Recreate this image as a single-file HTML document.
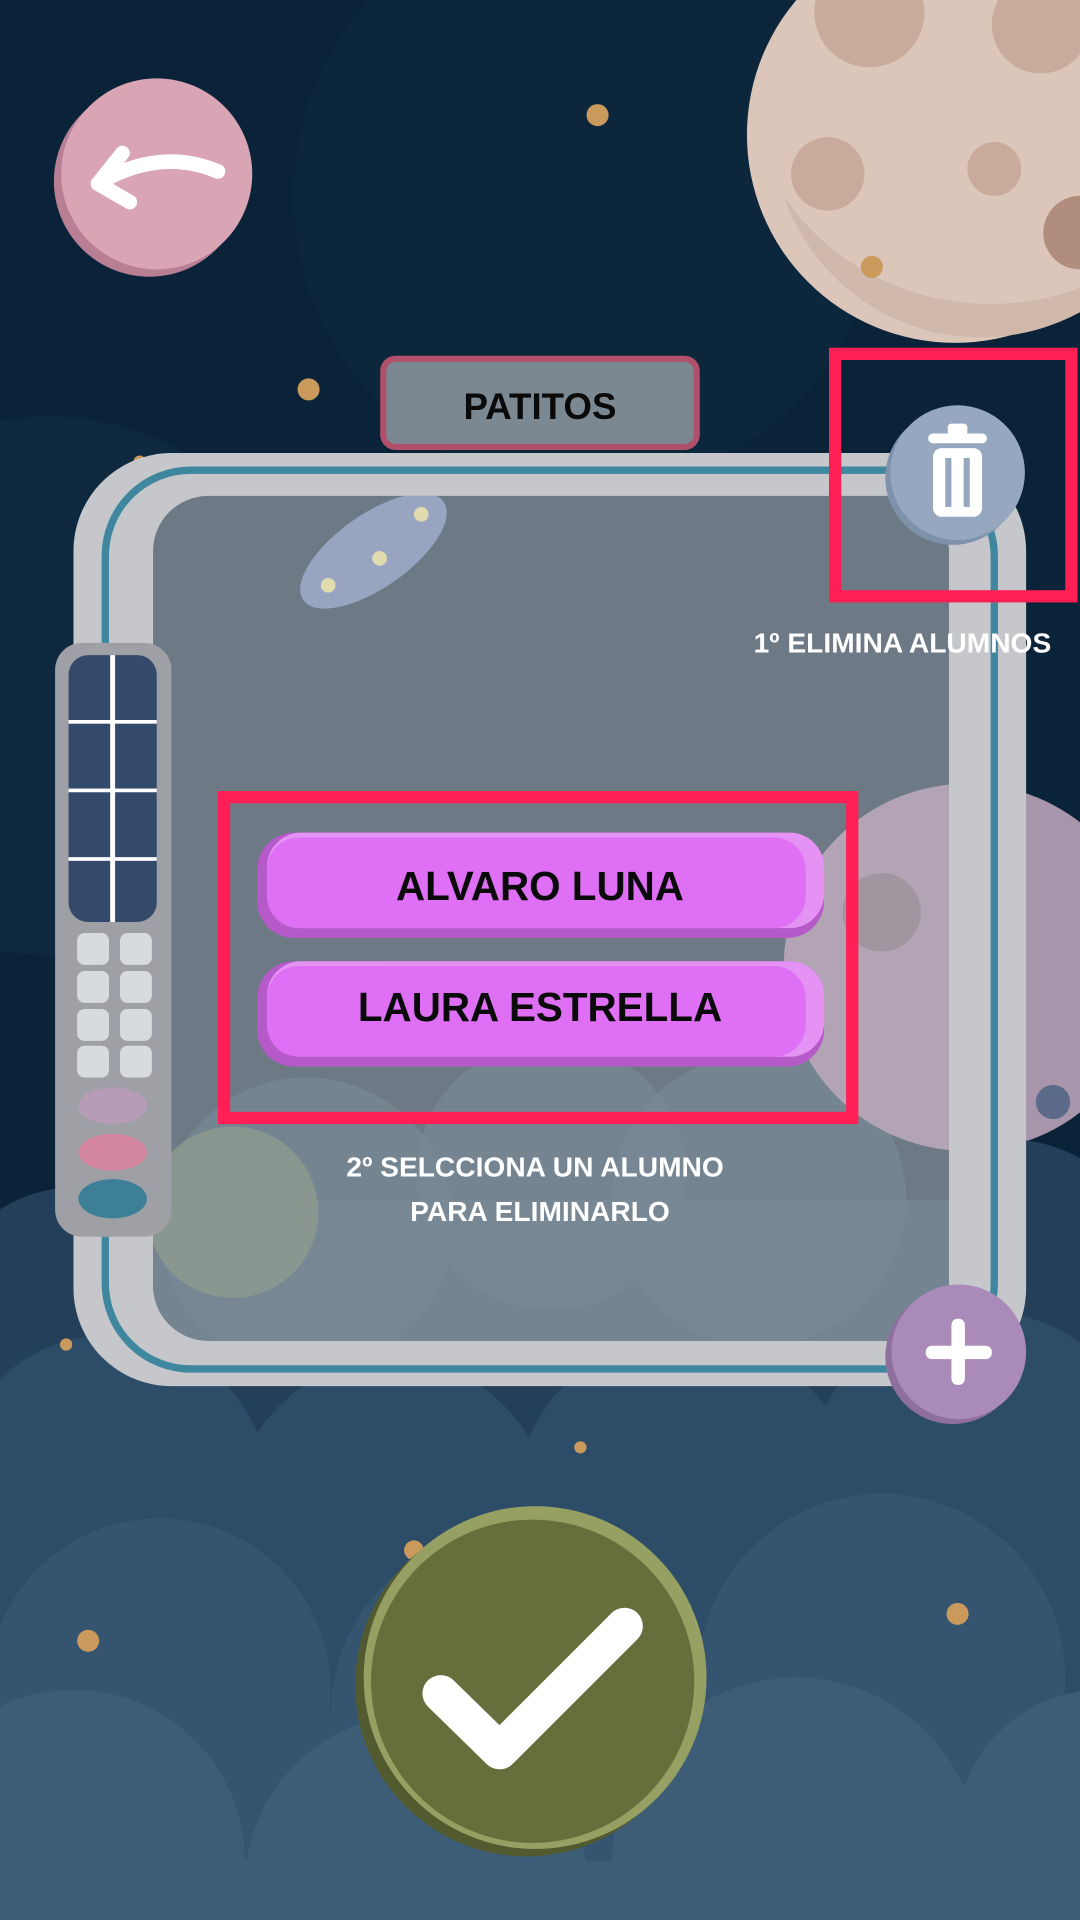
<!DOCTYPE html>
<html><head><meta charset="utf-8"><style>
html,body{margin:0;padding:0;background:#0b2338;width:1080px;height:1920px;overflow:hidden}
svg{display:block}
text{font-family:"Liberation Sans",sans-serif;font-weight:bold}
</style></head><body>
<svg width="1080" height="1920" viewBox="0 0 882 1568" xmlns="http://www.w3.org/2000/svg">
<defs><clipPath id="pc"><rect x="125" y="405" width="650" height="690" rx="45"/></clipPath></defs>
<rect width="882" height="1568" fill="#0b2338"/>
<circle cx="480" cy="160" r="240" fill="#0e2a40" opacity="0.6"/>
<circle cx="40" cy="560" r="220" fill="#102c44" opacity="0.6"/>
<circle cx="780" cy="110" r="170" fill="#dbc6b9"/>
<path d="M882 255 A170 170 0 0 1 640 160 A200 190 0 0 0 882 235Z" fill="#d0b9aa"/>
<circle cx="676" cy="142" r="30" fill="#c9ab9b"/>
<circle cx="812" cy="138" r="22" fill="#c9ab9b"/>
<circle cx="850" cy="20" r="40" fill="#c9ab9b"/>
<circle cx="710" cy="10" r="45" fill="#c9ab9b"/>
<circle cx="882" cy="190" r="30" fill="#b08d7c"/>
<!-- planet behind frame -->
<circle cx="790" cy="790" r="150" fill="#a796ab"/>
<circle cx="860" cy="900" r="14" fill="#5a6a88"/>
<g fill="#233f5a">
<circle cx="60" cy="1080" r="110"/><circle cx="230" cy="1110" r="120"/><circle cx="420" cy="1120" r="120"/><circle cx="620" cy="1100" r="130"/><circle cx="820" cy="1060" r="130"/>
<rect x="0" y="1100" width="882" height="470"/>
</g>
<g fill="#2c4c68">
<circle cx="90" cy="1220" r="130"/><circle cx="320" cy="1240" r="130"/><circle cx="560" cy="1230" r="140"/><circle cx="800" cy="1210" r="140"/>
<rect x="0" y="1230" width="882" height="340"/>
</g>
<g fill="#34546f">
<circle cx="130" cy="1380" r="140"/><circle cx="420" cy="1400" r="150"/><circle cx="720" cy="1370" r="150"/>
<rect x="0" y="1400" width="882" height="170"/>
</g>
<g fill="#3d5d77">
<circle cx="60" cy="1520" r="140"/><circle cx="340" cy="1540" r="140"/><circle cx="650" cy="1520" r="150"/><circle cx="900" cy="1500" r="120"/>
<rect x="0" y="1520" width="882" height="50"/>
</g>
<g fill="#c99a5c">
<circle cx="488" cy="94" r="9"/><circle cx="252" cy="318" r="9"/><circle cx="712" cy="218" r="9"/><circle cx="114" cy="377" r="5"/><circle cx="72" cy="1340" r="9"/><circle cx="782" cy="1318" r="9"/><circle cx="54" cy="1098" r="5"/><circle cx="474" cy="1182" r="5"/><circle cx="338" cy="1266" r="8"/>
</g>
<circle cx="122" cy="148" r="78" fill="#b87f94"/>
<circle cx="128" cy="142" r="78" fill="#d9a4b4"/>
<path d="M178 140 Q130 120 80 150 M80 150 L100 125 M80 150 L106 165" stroke="#fff" stroke-width="12" stroke-linecap="round" fill="none"/>
<rect x="60" y="370" width="778" height="762" rx="80" fill="#c6c7cb"/>
<rect x="86" y="384" width="726" height="734" rx="70" fill="none" stroke="#3f879e" stroke-width="6"/>
<rect x="125" y="405" width="650" height="690" rx="45" fill="#6d7a86"/>
<g clip-path="url(#pc)">
<circle cx="250" cy="1000" r="120" fill="#798996" opacity="0.7"/>
<circle cx="450" cy="960" r="110" fill="#798996" opacity="0.7"/>
<circle cx="620" cy="980" r="120" fill="#798996" opacity="0.7"/>
<rect x="125" y="980" width="650" height="120" fill="#798996" opacity="0.7"/>
<circle cx="790" cy="790" r="150" fill="#b2a3b5"/>
<circle cx="720" cy="745" r="32" fill="#a1959f"/>
<circle cx="190" cy="990" r="70" fill="#8f9a8e" opacity="0.8"/>
<ellipse cx="305" cy="450" rx="70" ry="30" transform="rotate(-35 305 450)" fill="#98a4c0"/>
<circle cx="268" cy="478" r="6" fill="#e0dcb0"/><circle cx="310" cy="456" r="6" fill="#e0dcb0"/><circle cx="344" cy="420" r="6" fill="#e0dcb0"/>
</g>
<rect x="45" y="525" width="95" height="485" rx="22" fill="#9ea0a5"/>
<rect x="56" y="535" width="72" height="218" rx="16" fill="#344a6b"/>
<rect x="90" y="535" width="4" height="218" fill="#fff"/>
<rect x="56" y="588" width="72" height="3" fill="#fff"/><rect x="56" y="644" width="72" height="3" fill="#fff"/><rect x="56" y="700" width="72" height="3" fill="#fff"/>
<g fill="#d8dbde">
<rect x="63" y="762" width="26" height="26" rx="6"/><rect x="98" y="762" width="26" height="26" rx="6"/>
<rect x="63" y="793" width="26" height="26" rx="6"/><rect x="98" y="793" width="26" height="26" rx="6"/>
<rect x="63" y="824" width="26" height="26" rx="6"/><rect x="98" y="824" width="26" height="26" rx="6"/>
<rect x="63" y="854" width="26" height="26" rx="6"/><rect x="98" y="854" width="26" height="26" rx="6"/>
</g>
<ellipse cx="92" cy="903" rx="28" ry="15" fill="#b69cb6"/>
<ellipse cx="92" cy="941" rx="28" ry="15" fill="#d3869e"/>
<ellipse cx="92" cy="979" rx="28" ry="16" fill="#3e7f98"/>
<rect x="313" y="293" width="256" height="72" rx="10" fill="#7b8891" stroke="#b0506a" stroke-width="5"/>
<text x="441" y="342" font-size="30" text-anchor="middle" fill="#0a0a0a">PATITOS</text>
<circle cx="778" cy="390" r="55" fill="#7e92ab"/>
<circle cx="782" cy="386" r="55" fill="#95a8bf"/>
<rect x="758" y="354" width="48" height="8" rx="4" fill="#fff"/>
<rect x="774" y="346" width="16" height="10" rx="3" fill="#fff"/>
<rect x="762" y="366" width="40" height="56" rx="7" fill="#fff"/>
<rect x="772" y="374" width="5" height="40" fill="#95a8bf"/><rect x="787" y="374" width="5" height="40" fill="#95a8bf"/>
<rect x="682" y="289" width="193" height="198" fill="none" stroke="#ff1f54" stroke-width="10"/>
<text x="737" y="533" font-size="23" text-anchor="middle" fill="#fff">1º ELIMINA ALUMNOS</text>
<rect x="183" y="651" width="513" height="262" fill="none" stroke="#ff1f54" stroke-width="10"/>
<rect x="210" y="680" width="463" height="86" rx="30" fill="#b55ac8"/>
<rect x="218" y="680" width="455" height="78" rx="28" fill="#e592f5"/>
<rect x="218" y="684" width="440" height="74" rx="26" fill="#df6ff4"/>
<text x="441" y="735" font-size="33" text-anchor="middle" fill="#0a0a0a">ALVARO LUNA</text>
<rect x="210" y="785" width="463" height="86" rx="30" fill="#b55ac8"/>
<rect x="218" y="785" width="455" height="78" rx="28" fill="#e592f5"/>
<rect x="218" y="789" width="440" height="74" rx="26" fill="#df6ff4"/>
<text x="441" y="834" font-size="33" text-anchor="middle" fill="#0a0a0a">LAURA ESTRELLA</text>
<text x="437" y="961" font-size="23" text-anchor="middle" fill="#fff">2º SELCCIONA UN ALUMNO</text>
<text x="441" y="997" font-size="23" text-anchor="middle" fill="#fff">PARA ELIMINARLO</text>
<circle cx="778" cy="1108" r="55" fill="#8e6f9e"/>
<circle cx="783" cy="1104" r="55" fill="#a98ab8"/>
<rect x="756" y="1099" width="54" height="11" rx="5" fill="#fff"/>
<rect x="777" y="1077" width="11" height="54" rx="5" fill="#fff"/>
<circle cx="430" cy="1376" r="140" fill="#525a30"/>
<circle cx="437" cy="1370" r="140" fill="#96a062"/>
<circle cx="435" cy="1373" r="132" fill="#666e3b"/>
<path d="M360 1383 L408 1430 L510 1328" stroke="#fff" stroke-width="30" stroke-linecap="round" stroke-linejoin="round" fill="none"/>
</svg>
</body></html>
